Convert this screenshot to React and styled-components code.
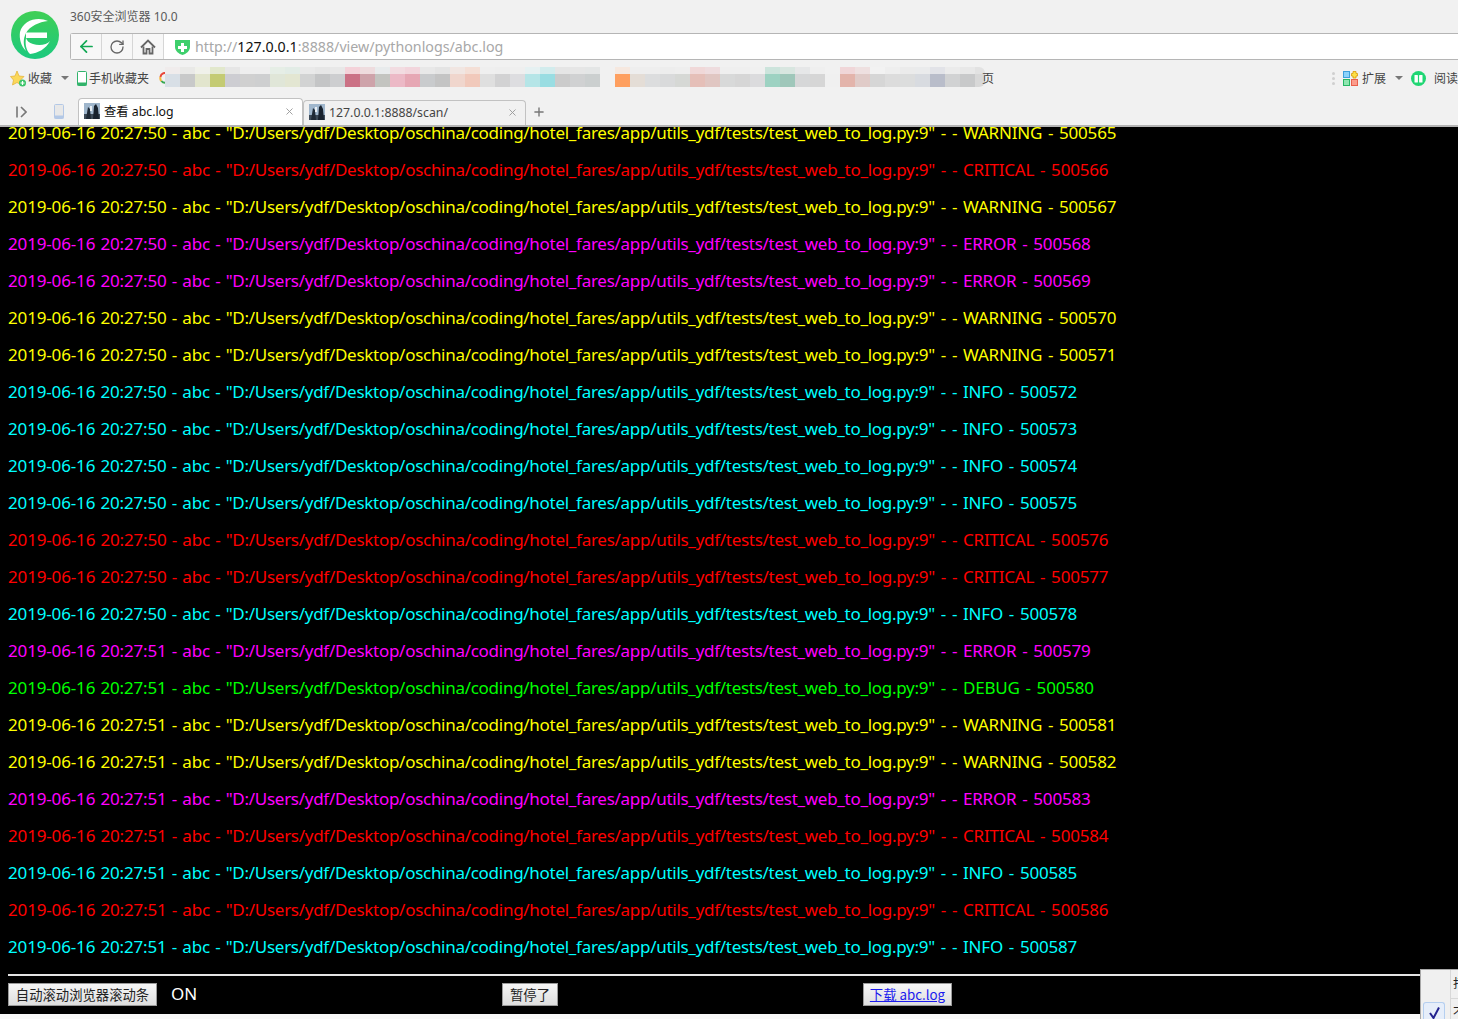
import React from 'react';
import styled, { createGlobalStyle } from 'styled-components';
import { ArrowLeft, RotateCw, Plus, X } from 'lucide-react';

const GlobalStyle = createGlobalStyle`
    html, body {
        margin: 0;
        padding: 0;
        height: 100%;
        overflow: hidden;
        background: #f9f9f9;
    }
    body {
        font-family: "Noto Sans", "Noto Sans CJK SC", sans-serif;
    }
`;

const uiFont = '"Noto Sans", "Noto Sans CJK SC", sans-serif';

const levelColors = {
    WARNING: '#ffff00',
    CRITICAL: '#ff0000',
    ERROR: '#ff00ff',
    INFO: '#00ffff',
    DEBUG: '#00ff00',
};

const levels = [
    'WARNING', 'CRITICAL', 'WARNING', 'ERROR', 'ERROR', 'WARNING', 'WARNING', 'INFO',
    'INFO', 'INFO', 'INFO', 'CRITICAL', 'CRITICAL', 'INFO', 'ERROR', 'DEBUG',
    'WARNING', 'WARNING', 'ERROR', 'CRITICAL', 'INFO', 'CRITICAL', 'INFO',
];

// the blurred bookmarks, [top colour, bottom colour] of every mosaic cell
const mosaicLeft = [
    ['#f0ecec', '#d8dfe6'], ['#e9e9e7', '#c8c9c9'], ['#f0f1ea', '#e2e5cd'], ['#e2e8cc', '#c4cb73'],
    ['#e6e6e6', '#cdcdd2'], ['#eeeeee', '#d0d0d0'], ['#eeeeee', '#cecfd0'], ['#e6eee6', '#e0e6d8'],
    ['#e2ece6', '#e3e6d2'], ['#e9e9e9', '#d2d3d3'], ['#e6e6e6', '#c4c5c6'], ['#e8e8e8', '#cdced0'],
    ['#f4d2d9', '#cb7185'], ['#eedcde', '#cea3aa'], ['#e8ebec', '#c3c4c0'], ['#f2dce1', '#ecb9c6'],
    ['#f2d5dc', '#e6a7b4'], ['#e8e8e8', '#c9cbcd'], ['#e4e4e4', '#c4c4c4'], ['#f1e6e2', '#f0d6cd'],
    ['#f4dfd6', '#f1c9bb'], ['#efefef', '#dfdfdf'], ['#eeeeee', '#d2d2d3'], ['#efefef', '#dddde0'],
    ['#e6f1f2', '#b5e5e7'], ['#d2eced', '#99dde2'], ['#e5e5e5', '#cbcbcb'], ['#e6e6e6', '#d0d1d2'],
    ['#e4e6e6', '#cbcfcf'],
];

const mosaicRight = [
    ['#f6e8df', '#fe9f5f'], ['#eeeeee', '#e4ddd6'], ['#eeeeee', '#dcddde'], ['#ededed', '#d9dadb'],
    ['#eeeeee', '#d6d8d5'], ['#f0d8d8', '#e5bfb8'], ['#eedcde', '#e0c6c2'], ['#efefef', '#d8d9d9'],
    ['#efefef', '#d6d6d6'], ['#f0f0f0', '#dbdbdd'], ['#cce4dc', '#9dd2c2'], ['#d8e6e0', '#9fc7ba'],
    ['#e6e7e8', '#d6d7d8'], ['#efefef', '#d6d6d6'], ['#f1f1f1', '#f0f0f0'], ['#f0d6d8', '#e3b4ab'],
    ['#eee0e0', '#e0cbc8'], ['#f2f2f2', '#d6d6d6'], ['#eeeeee', '#dcdcdc'], ['#ebebeb', '#dcdddd'],
    ['#eaebec', '#d8dbe0'], ['#e2e3e8', '#b9bdca'], ['#ebebeb', '#d1d2d3'], ['#e8e8e8', '#c8c9ca'],
];

const Page = styled.div`
    display: flex;
    flex-direction: column;
    height: 1019px;
    overflow: hidden;
    position: relative;
`;

const Chrome = styled.header`
    flex: 0 0 127px;
    box-sizing: border-box;
    height: 127px;
    background: #f1f1f1;
    border-bottom: 2px solid #b4b4b4;
    font-family: ${uiFont};
    color: #444;
    position: relative;
    overflow: hidden;
`;

const TopRow = styled.div`
    display: flex;
    height: 60px;
`;

const LogoBox = styled.div`
    flex: 0 0 70px;
    padding: 11px 0 0 11px;
    box-sizing: border-box;
`;

const TopColumn = styled.div`
    flex: 1;
    min-width: 0;
`;

const WindowTitle = styled.div`
    height: 33px;
    padding-top: 9px;
    box-sizing: border-box;
    font-size: 12px;
    line-height: 16px;
    color: #5a5a5a;
`;

const AddressBar = styled.div`
    display: flex;
    align-items: center;
    height: 27px;
    box-sizing: border-box;
    background: #fff;
    border: 1px solid #b5b5b5;
    border-right: none;
    border-radius: 3px 0 0 3px;
`;

const NavButton = styled.div`
    flex: 0 0 31px;
    height: 25px;
    display: flex;
    align-items: center;
    justify-content: center;
    box-sizing: border-box;
    background: #f7f7f7;
    border-right: 1px solid #d6d6d6;
    color: ${props => props.$color || '#666'};
`;

const UrlBox = styled.div`
    display: flex;
    align-items: center;
    padding-left: 11px;
    gap: 5px;
    font-size: 14.25px;
    line-height: 23px;
    height: 25px;
    color: #a8a8a8;
`;

const UrlHost = styled.span`
    color: #111;
`;

const BookmarkRow = styled.div`
    display: flex;
    align-items: center;
    height: 24px;
    margin-top: 6px;
    font-size: 12px;
    padding-left: 10px;
`;

const BookmarkItem = styled.div`
    display: flex;
    align-items: center;
    gap: ${props => props.$gap || 3}px;
    margin-right: ${props => props.$after || 0}px;
    white-space: nowrap;
`;

const Caret = styled.span`
    display: inline-block;
    width: 0;
    height: 0;
    border-left: 4px solid transparent;
    border-right: 4px solid transparent;
    border-top: 4px solid #777;
    margin-left: ${props => props.$left || 0}px;
    margin-right: ${props => props.$right || 0}px;
`;

const Mosaic = styled.div`
    display: flex;
    height: 20px;
    margin-left: ${props => props.$left || 0}px;
    margin-top: -2px;
`;

const MosaicCell = styled.div`
    flex: 0 0 ${props => props.$width || 15}px;
    background: linear-gradient(${props => props.$top} 7px, ${props => props.$bottom} 7px);
    border-radius: ${props => props.$round || '0'};
`;

const PageGlyph = styled.span`
    margin-left: -3px;
`;

const BookmarkSpacer = styled.div`
    flex: 1;
`;

const Grip = styled.div`
    display: flex;
    flex-direction: column;
    gap: 2px;
    margin-right: 8px;
`;

const GripDot = styled.span`
    width: 3px;
    height: 3px;
    background: #cfcfcf;
    border-radius: 50%;
`;

const TabRow = styled.div`
    display: flex;
    align-items: flex-end;
    height: 29px;
    margin-top: 8px;
`;

const TabTools = styled.div`
    flex: 0 0 78px;
    height: 27px;
    display: flex;
    align-items: center;
    padding: 0 0 4px 16px;
    gap: 27px;
    box-sizing: border-box;
`;

const Tab = styled.div`
    flex: 0 0 ${props => (props.$active ? 225 : 223)}px;
    height: ${props => (props.$active ? 29 : 27)}px;
    box-sizing: border-box;
    display: flex;
    align-items: center;
    padding: 0 7px ${props => (props.$active ? 4 : 4)}px 5px;
    gap: 4px;
    font-size: 12.3px;
    color: ${props => (props.$active ? '#111' : '#444')};
    background: ${props => (props.$active ? '#fff' : '#f1f1f1')};
    border: 1px solid #c2c2c2;
    border-bottom: none;
    border-radius: 4px 4px 0 0;
    margin-right: ${props => (props.$active ? 0 : 6)}px;
`;

const TabTitle = styled.span`
    flex: 1;
    white-space: nowrap;
`;

const NewTab = styled.div`
    height: 27px;
    display: flex;
    align-items: center;
    padding-bottom: 4px;
    box-sizing: border-box;
    color: #777;
`;

const LogArea = styled.main`
    flex: 0 0 887px;
    height: 887px;
    background: #000;
    overflow: hidden;
    padding: 0 8px;
    box-sizing: border-box;
`;

const LogList = styled.div`
    margin-top: -13px;
`;

const LogLine = styled.p`
    margin: 0;
    height: 37px;
    line-height: 37px;
    font-family: "Noto Sans", sans-serif;
    font-size: 17px;
    white-space: nowrap;
    color: ${props => levelColors[props.$level]};
`;

const Stamp = styled.span`
    letter-spacing: -0.15px;
    word-spacing: 0.9px;
`;

const FilePath = styled.span`
    letter-spacing: -0.28px;
`;

const LevelTail = styled.span`
    letter-spacing: -0.2px;
    word-spacing: 1.6px;
`;

const Rule = styled.hr`
    margin: 9px 0 7px;
    height: 0;
    border: none;
    border-top: 2px solid #e4e4e4;
`;

const Controls = styled.div`
    display: flex;
    align-items: center;
    height: 23px;
`;

const OldButton = styled.button`
    box-sizing: border-box;
    flex: 0 0 ${props => props.$width}px;
    height: 23px;
    padding: 0;
    margin-right: ${props => props.$after || 0}px;
    font-family: "Noto Sans CJK SC", sans-serif;
    font-size: 13.33px;
    line-height: 20px;
    color: #222;
    background: linear-gradient(#f6f6f6, #dedede);
    border: 1px solid #9a9a9a;
    border-radius: 0;
    white-space: nowrap;
`;

const DownloadLink = styled.a`
    color: #1a1aee;
    text-decoration: underline;
`;

const StateText = styled.span`
    flex: 0 0 345px;
    color: #fff;
    font-family: "Noto Sans", sans-serif;
    font-size: 17px;
    line-height: 20px;
    padding: 0 0 2px 14px;
    box-sizing: border-box;
`;

const ContextMenu = styled.div`
    position: absolute;
    right: 0;
    bottom: 0;
    width: 38px;
    height: 50px;
    box-sizing: border-box;
    background: #f0f0f0;
    border: 1px solid #a8a8a8;
    border-right: none;
    border-bottom: none;
    font-family: "Noto Sans CJK SC", sans-serif;
    font-size: 12px;
    color: #222;
    display: grid;
    grid-template-columns: 29px 1fr;
    grid-template-rows: 28px 1fr;
    overflow: hidden;
`;

const MenuGlyph = styled.div`
    border-left: 1px solid #d8d8d8;
    padding-left: 2px;
    overflow: hidden;
    line-height: 26px;
    border-top: ${props => (props.$sep ? '1px solid #d8d8d8' : 'none')};
`;

const MenuCheck = styled.div`
    margin: 4px 5px 0 2px;
    border: 1px solid #b5cff0;
    border-radius: 3px 3px 0 0;
    border-bottom: none;
    background: #e6eefa;
    display: flex;
    justify-content: center;
    padding-top: 4px;
`;

const MenuBlank = styled.div``;

function Logo() {
    return (
        <svg width="48" height="48" viewBox="0 0 48 48">
            <defs>
                <linearGradient id="logoFill" x1="0" y1="0" x2="0" y2="1">
                    <stop offset="0" stopColor="#3fcf55" />
                    <stop offset="1" stopColor="#1cc97f" />
                </linearGradient>
            </defs>
            <circle cx="24" cy="24" r="24" fill="url(#logoFill)" />
            <path d="M37 10 C27 5 12 9 9 21 C8 28 10 35 15 40 C12 34 12 28 15 22 C19 15 28 11 37 10 Z" fill="#fff" />
            <rect x="15" y="21.5" width="21" height="5.5" fill="#fff" />
            <path d="M39 30 C36 34 28 35 22 33 C18 32 16 30 15 27 C14 33 15 39 19 43 C27 42 35 38 39 30 Z" fill="#fff" />
        </svg>
    );
}

function Shield() {
    return (
        <svg width="15" height="16" viewBox="0 0 15 16">
            <path d="M0 1 L15 1 L15 8 C15 12 11 15 7.5 16 C4 15 0 12 0 8 Z" fill="#3ecf6c" />
            <path d="M6 4 H9 V7 H12 V10 H9 V13 H6 V10 H3 V7 H6 Z" fill="#fff" />
        </svg>
    );
}

function HomeIcon() {
    return (
        <svg width="16" height="16" viewBox="0 0 16 16" fill="none" stroke="#666" strokeWidth="1.8">
            <path d="M1 8.5 L8 1.5 L15 8.5" />
            <path d="M3.5 7.5 V14.5 H6.5 V10 H9.5 V14.5 H12.5 V7.5" />
        </svg>
    );
}

function StarIcon() {
    return (
        <svg width="16" height="17" viewBox="0 0 16 17">
            <path d="M7 1 L9 6 L14 6.5 L10.5 10 L11.5 15 L7 12.5 L2.5 15 L3.5 10 L0.5 6.5 L5 6 Z" fill="#fbd85a" stroke="#e5b53d" strokeWidth="0.8" />
            <circle cx="12.5" cy="13" r="3.5" fill="#3cc46a" />
            <path d="M12.5 11 V15 M10.5 13 H14.5" stroke="#fff" strokeWidth="1.2" />
        </svg>
    );
}

function PhoneIcon({ color, fill }) {
    return (
        <svg width="10" height="15" viewBox="0 0 10 15">
            <rect x="0.5" y="0.5" width="9" height="14" rx="1" fill={fill} stroke={color} />
            <rect x="0.5" y="11.5" width="9" height="3" fill={color} />
        </svg>
    );
}

function GoogleIcon() {
    return (
        <svg width="10" height="12" viewBox="0 0 10 12" fill="none" strokeWidth="2">
            <path d="M9 2 C6 0 2 1 1.4 5" stroke="#e8483a" />
            <path d="M1.4 5 C1 7 1.4 8 2.4 9" stroke="#f4b63c" />
            <path d="M2.4 9 C4 11 7 11 9 10" stroke="#38a853" />
        </svg>
    );
}

function ExtensionIcon() {
    return (
        <svg width="15" height="15" viewBox="0 0 15 15">
            <rect x="0.5" y="0.5" width="6" height="6" fill="#8bd2fb" stroke="#3d9fdc" />
            <rect x="0.5" y="8.5" width="6" height="6" fill="#8fe6b0" stroke="#27b765" />
            <rect x="8.5" y="8.5" width="6" height="6" fill="#fb9c8c" stroke="#e9604c" />
            <path d="M10 0.5 H13 V2.5 H14.5 V5 H13 V7 H10 V5 H8.5 V2.5 H10 Z" fill="#fde047" stroke="#d99a06" strokeWidth="0.8" />
        </svg>
    );
}

function ReaderIcon() {
    return (
        <svg width="15" height="15" viewBox="0 0 15 15">
            <circle cx="7.5" cy="7.5" r="7.5" fill="#1fd673" />
            <rect x="3.5" y="4" width="3.4" height="7.5" rx="0.6" fill="#fff" />
            <rect x="8.1" y="4" width="3.4" height="7.5" rx="0.6" fill="#fff" />
        </svg>
    );
}

function SidebarIcon() {
    return (
        <svg width="11" height="12" viewBox="0 0 11 12" fill="none" stroke="#777" strokeWidth="1.6">
            <path d="M1 0.5 V11.5" />
            <path d="M5 1 L10 6 L5 11" />
        </svg>
    );
}

function TabThumb() {
    return (
        <svg width="16" height="16" viewBox="0 0 16 16">
            <rect width="16" height="16" fill="#9fb6cc" />
            <rect y="11" width="16" height="5" fill="#3c4a58" />
            <path d="M2 16 L4 4 L6 6 L7 16 Z" fill="#1f2a36" />
            <path d="M9 16 L10 3 L12 1 L14 5 L15 16 Z" fill="#18222e" />
            <rect x="6" y="3" width="2" height="5" fill="#e8eef4" />
        </svg>
    );
}

function MenuTick() {
    return (
        <svg width="11" height="12" viewBox="0 0 11 12" fill="none" stroke="#23238f" strokeWidth="2">
            <path d="M1 6 L4.5 11 L10 0.5" />
        </svg>
    );
}

export default function App() {
    return (
        <Page>
            <GlobalStyle />
            <Chrome>
                <TopRow>
                    <LogoBox>
                        <Logo />
                    </LogoBox>
                    <TopColumn>
                        <WindowTitle>360安全浏览器 10.0</WindowTitle>
                        <AddressBar>
                            <NavButton $color="#12a854">
                                <ArrowLeft size={19} strokeWidth={2.2} />
                            </NavButton>
                            <NavButton>
                                <RotateCw size={16} strokeWidth={2} />
                            </NavButton>
                            <NavButton>
                                <HomeIcon />
                            </NavButton>
                            <UrlBox>
                                <Shield />
                                <span>
                                    http://<UrlHost>127.0.0.1</UrlHost>:8888/view/pythonlogs/abc.log
                                </span>
                            </UrlBox>
                        </AddressBar>
                    </TopColumn>
                </TopRow>

                <BookmarkRow>
                    <BookmarkItem $gap={2} $after={9}>
                        <StarIcon />
                        <span>收藏</span>
                    </BookmarkItem>
                    <Caret $right={8} />
                    <BookmarkItem $gap={2} $after={10}>
                        <PhoneIcon color="#31b36b" fill="#fff" />
                        <span>手机收藏夹</span>
                    </BookmarkItem>
                    <GoogleIcon />
                    <Mosaic $left={-4}>
                        {mosaicLeft.map((cell, i) => (
                            <MosaicCell key={i} $top={cell[0]} $bottom={cell[1]} />
                        ))}
                    </Mosaic>
                    <Mosaic $left={15}>
                        {mosaicRight.map((cell, i) => (
                            <MosaicCell key={i} $top={cell[0]} $bottom={cell[1]} />
                        ))}
                        <MosaicCell $top="#e2e2e2" $bottom="#d8d8d8" $width={10} $round="0 6px 6px 0" />
                    </Mosaic>
                    <PageGlyph>页</PageGlyph>
                    <BookmarkSpacer />
                    <Grip>
                        <GripDot />
                        <GripDot />
                        <GripDot />
                    </Grip>
                    <BookmarkItem $gap={4} $after={9}>
                        <ExtensionIcon />
                        <span>扩展</span>
                    </BookmarkItem>
                    <Caret $right={8} />
                    <BookmarkItem $gap={8}>
                        <ReaderIcon />
                        <span>阅读</span>
                    </BookmarkItem>
                </BookmarkRow>

                <TabRow>
                    <TabTools>
                        <SidebarIcon />
                        <PhoneIcon color="#b3c8e6" fill="#e8e8e8" />
                    </TabTools>
                    <Tab $active>
                        <TabThumb />
                        <TabTitle>查看 abc.log</TabTitle>
                        <X size={11} color="#999" />
                    </Tab>
                    <Tab>
                        <TabThumb />
                        <TabTitle>127.0.0.1:8888/scan/</TabTitle>
                        <X size={11} color="#999" />
                    </Tab>
                    <NewTab>
                        <Plus size={14} strokeWidth={2.4} />
                    </NewTab>
                </TabRow>
            </Chrome>

            <LogArea>
                <LogList>
                    {levels.map((level, i) => (
                        <LogLine key={i} $level={level}>
                            <Stamp>{`2019-06-16 20:27:${i < 14 ? 50 : 51} - abc - `}</Stamp>
                            <FilePath>"D:/Users/ydf/Desktop/oschina/coding/hotel_fares/app/utils_ydf/tests/test_web_to_log.py:9</FilePath>
                            <LevelTail>{`" - - ${level} - ${500565 + i}`}</LevelTail>
                        </LogLine>
                    ))}
                </LogList>
                <Rule />
                <Controls>
                    <OldButton $width={149}>自动滚动浏览器滚动条</OldButton>
                    <StateText>ON</StateText>
                    <OldButton $width={56} $after={305}>暂停了</OldButton>
                    <OldButton $width={89}>
                        <DownloadLink href="#">下载 abc.log</DownloadLink>
                    </OldButton>
                </Controls>
            </LogArea>
            <ContextMenu>
                <MenuBlank />
                <MenuGlyph>打</MenuGlyph>
                <MenuCheck>
                    <MenuTick />
                </MenuCheck>
                <MenuGlyph $sep>不</MenuGlyph>
            </ContextMenu>
        </Page>
    );
}
